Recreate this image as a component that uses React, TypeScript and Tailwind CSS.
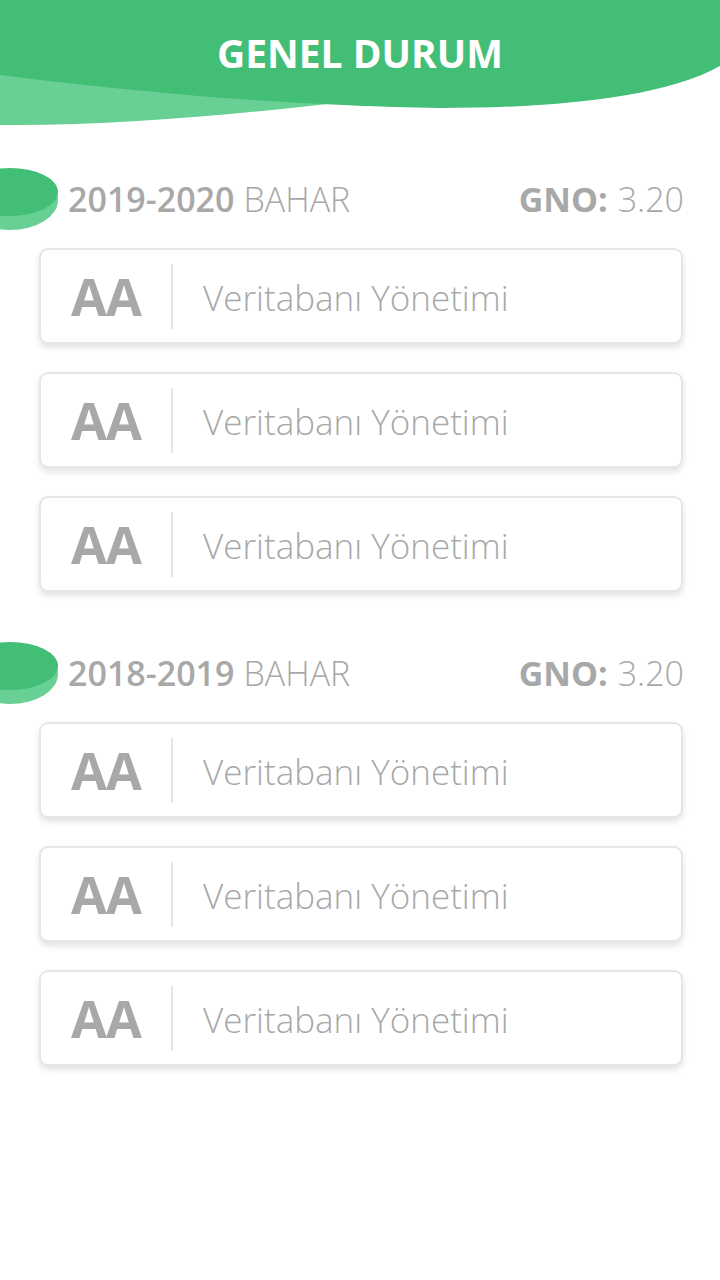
import React from "react";

const font = { fontFamily: '"Open Sans", "Noto Sans", sans-serif' };

function Blob() {
  return (
    <svg width="60" height="64" viewBox="0 0 60 64" className="shrink-0">
      <ellipse cx="10" cy="33" rx="48" ry="30" fill="#68d094" />
      <ellipse cx="10" cy="25" rx="48" ry="24" fill="#43be77" />
    </svg>
  );
}

function Card() {
  return (
    <div className="flex h-[96px] items-center rounded-[9px] border-2 border-[#e6e6e6] bg-white shadow-[0_4px_6px_rgba(0,0,0,0.11)]">
      <div className="flex w-[130px] justify-center text-[52px] font-bold leading-none text-[#a8a8a8] tracking-[-1px]">
        AA
      </div>
      <div className="h-[65px] w-[2px] bg-[#e6e6e6]" />
      <div className="pl-[30px] pt-[3px] text-[35px] font-light leading-none text-[#a8a8a8]">
        Veritabanı Yönetimi
      </div>
    </div>
  );
}

function Section({ year, top }: { year: string; top: string }) {
  return (
    <div className={top}>
      <div className="flex h-[64px] items-center pr-[36px]">
        <Blob />
        <div className="ml-[8px] flex flex-1 items-baseline text-[#a8a8a8] leading-none">
          <span className="text-[34px] font-semibold">{year}</span>
          <span className="ml-[9px] text-[34px] font-light">BAHAR</span>
          <span className="ml-auto text-[34px] font-bold">GNO:</span>
          <span className="ml-[10px] text-[34px] font-light">3.20</span>
        </div>
      </div>
      <div className="mt-[17px] flex flex-col gap-[28px] pl-[39px] pr-[37px]">
        <Card />
        <Card />
        <Card />
      </div>
    </div>
  );
}

export default function App() {
  return (
    <div className="min-h-[1280px] w-[720px] bg-white" style={font}>
      <div className="relative h-[130px]">
        <svg
          className="absolute inset-0"
          width="720"
          height="130"
          viewBox="0 0 720 130"
        >
          <path d="M0 60 V125 C 120 126 240 114 345 102 L 345 60 Z" fill="#68d094" />
          <path
            d="M0 0 H720 V66 C 660 100 540 108 440 108 C 300 106 150 94 0 75 Z"
            fill="#43be77"
          />
        </svg>
        <h1 className="relative pt-[28px] text-center text-[39px] font-bold leading-[50px] text-white">
          GENEL DURUM
        </h1>
      </div>
      <Section year="2019-2020" top="mt-[37px]" />
      <Section year="2018-2019" top="mt-[49px]" />
    </div>
  );
}
